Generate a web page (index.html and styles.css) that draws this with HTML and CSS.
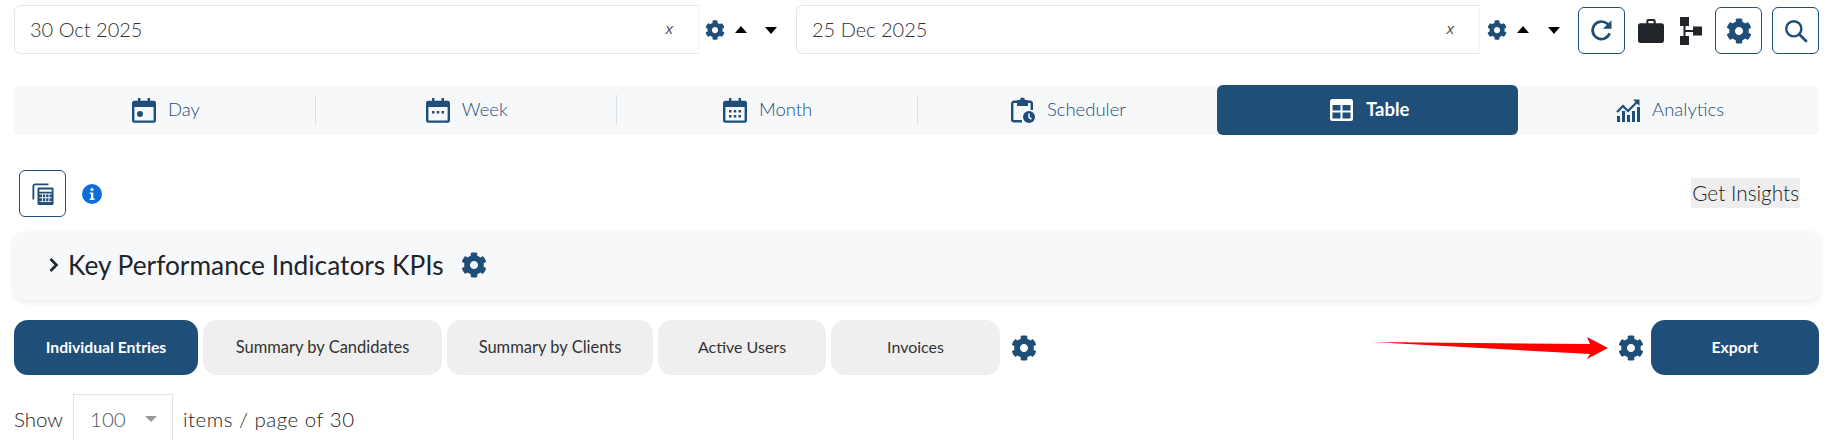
FILE: index.html
```html
<!DOCTYPE html>
<html lang="en">
<head>
<meta charset="utf-8">
<title>Table</title>
<link rel="stylesheet" href="styles.css">
</head>
<body>
<svg class="defs" width="0" height="0" aria-hidden="true">
  <symbol id="cog" viewBox="0 0 512 512"><path fill="currentColor" d="M487.4 315.7l-42.6-24.6c4.3-23.2 4.3-47 0-70.2l42.6-24.6c4.9-2.8 7.1-8.6 5.5-14-11.1-35.6-30-67.8-54.7-94.6-3.8-4.1-10-5.1-14.8-2.3L380.8 110c-17.9-15.4-38.5-27.3-60.8-35.1V25.8c0-5.6-3.9-10.5-9.4-11.7-36.7-8.2-74.3-7.8-109.2 0-5.5 1.2-9.4 6.1-9.4 11.7V75c-22.2 7.9-42.8 19.8-60.8 35.1L88.7 85.5c-4.9-2.8-11-1.9-14.8 2.3-24.7 26.7-43.6 58.9-54.7 94.6-1.7 5.4.6 11.2 5.5 14L67.3 221c-4.3 23.2-4.3 47 0 70.2l-42.6 24.6c-4.9 2.8-7.1 8.6-5.5 14 11.1 35.6 30 67.8 54.7 94.6 3.8 4.1 10 5.1 14.8 2.3l42.6-24.6c17.9 15.4 38.5 27.3 60.8 35.1v49.2c0 5.6 3.9 10.5 9.4 11.7 36.7 8.2 74.3 7.8 109.2 0 5.5-1.2 9.4-6.1 9.4-11.7v-49.2c22.2-7.9 42.8-19.8 60.8-35.1l42.6 24.6c4.9 2.8 11 1.9 14.8-2.3 24.7-26.7 43.6-58.9 54.7-94.6 1.5-5.5-.7-11.3-5.6-14.1zM256 336c-44.1 0-80-35.9-80-80s35.9-80 80-80 80 35.9 80 80-35.9 80-80 80z"/></symbol>
  <symbol id="cal" viewBox="0 0 24 26"><path fill="none" stroke="currentColor" stroke-width="2.4" d="M2.2 5h19.6a1 1 0 0 1 1 1v17.6a1 1 0 0 1-1 1H2.2a1 1 0 0 1-1-1V6a1 1 0 0 1 1-1z"/><path fill="currentColor" d="M1 5h22v5H1zM6 1h2.4v5H6zM15.6 1H18v5h-2.4z"/></symbol>
</svg>

<header class="date-bar">
  <div class="date-input date-input-first"><span>30 Oct 2025</span><i class="clear">x</i></div>
  <div class="date-tools">
    <svg class="cog-s"><use href="#cog"/></svg>
    <span class="tri tri-up"></span>
    <span class="tri tri-down"></span>
  </div>
  <div class="date-input date-input-second"><span>25 Dec 2025</span><i class="clear">x</i></div>
  <div class="date-tools">
    <svg class="cog-s"><use href="#cog"/></svg>
    <span class="tri tri-up"></span>
    <span class="tri tri-down"></span>
  </div>
  <div class="actions">
    <button class="icon-btn" type="button" aria-label="Refresh">
      <svg width="25" height="25" viewBox="0 0 24 24"><path fill="none" stroke="currentColor" stroke-width="2.6" d="M19.8 14.6A8.4 8.4 0 1 1 17.6 5.6l2.4 2.3"/><path fill="currentColor" d="M21.6 2.2v8.2h-8.2z"/></svg>
    </button>
    <svg class="case" width="26" height="24" viewBox="0 0 25 23"><path fill="#212529" d="M8 4V2a2 2 0 0 1 2-2h5a2 2 0 0 1 2 2v2h5.500a2.500 2.500 0 0 1 2.500 2.500V20.500a2.500 2.500 0 0 1-2.500 2.500h-20A2.500 2.500 0 0 1 0 20.500V6.500A2.500 2.500 0 0 1 2.500 4zM10 2v2h5V2z"/></svg>
    <svg class="tree" width="22" height="28" viewBox="0 0 22 28"><path fill="#212529" d="M0 0h9v9H0zM0 19h9v9H0zM13 9.500h9v9h-9zM3.500 9h2v10h-2zM5 13h8v2H5z"/></svg>
    <button class="icon-btn" type="button" aria-label="Settings"><svg class="cog-l"><use href="#cog"/></svg></button>
    <button class="icon-btn" type="button" aria-label="Search">
      <svg width="24" height="24" viewBox="0 0 24 24"><circle cx="9.800" cy="9.800" r="7.600" fill="none" stroke="currentColor" stroke-width="2.400"/><path stroke="currentColor" stroke-width="2.800" stroke-linecap="round" d="M15.500 15.500l6.500 6.500"/></svg>
    </button>
  </div>
</header>

<nav class="tabs">
  <a class="tab">
    <svg class="tab-icon"><use href="#cal"/><circle cx="8" cy="17" r="3" fill="currentColor"/></svg>
    <span>Day</span>
  </a>
  <a class="tab">
    <svg class="tab-icon"><use href="#cal"/><path fill="currentColor" d="M6 14h2.500v2.500H6zM10.750 14h2.500v2.500h-2.500zM15.500 14H18v2.500h-2.500z"/></svg>
    <span>Week</span>
  </a>
  <a class="tab">
    <svg class="tab-icon"><use href="#cal"/><path fill="currentColor" d="M6 13h2.500v2.500H6zM10.750 13h2.500v2.500h-2.500zM15.500 13H18v2.500h-2.500zM6 18h2.500v2.500H6zM10.750 18h2.500v2.500h-2.500zM15.500 18H18v2.500h-2.500z"/></svg>
    <span>Month</span>
  </a>
  <a class="tab tab-sched">
    <svg class="tab-icon" viewBox="0 0 24 26"><path fill="none" stroke="currentColor" stroke-width="2.400" d="M11 24.300H3a1.800 1.800 0 0 1-1.800-1.800V6.500A1.800 1.800 0 0 1 3 4.700h16a1.800 1.800 0 0 1 1.800 1.800V13"/><path fill="currentColor" d="M6 3h3a2.500 2.500 0 0 1 5 0h3v6H6z"/><circle cx="18" cy="20" r="6" fill="currentColor"/><path fill="none" stroke="#f6f8fa" stroke-width="1.500" d="M18 16.500V20.500l2.500 1.500"/></svg>
    <span>Scheduler</span>
  </a>
  <a class="tab tab-active">
    <svg class="tab-icon" viewBox="0 0 24 24"><path fill="currentColor" fill-rule="evenodd" d="M3 1h18a2.500 2.500 0 0 1 2.500 2.500v17A2.500 2.500 0 0 1 21 23H3a2.500 2.500 0 0 1-2.500-2.500v-17A2.500 2.500 0 0 1 3 1zM3 7v5.500h8V7zM13 7v5.500h8V7zM3 14.500V20.500h8v-6zM13 14.500V20.500h8v-6z"/></svg>
    <span>Table</span>
  </a>
  <a class="tab">
    <svg class="tab-icon" viewBox="0 0 24 24"><path fill="none" stroke="currentColor" stroke-width="2.200" d="M1 14l6-6 5 5 9-9"/><path fill="currentColor" d="M23.500 1.500v6.500l-6.500-6.500zM1 18h3v6H1zM6 13h3v11H6zM11 17h3v7h-3zM16 13h3v11h-3zM21 9h3v15h-3z"/></svg>
    <span>Analytics</span>
  </a>
</nav>

<section class="tools-row">
  <div class="tools-left">
    <button class="icon-btn" type="button" aria-label="Calculator">
      <svg width="22" height="22" viewBox="0 0 24 24"><path fill="none" stroke="currentColor" stroke-width="2" d="M18 1.500H3.500a2 2 0 0 0-2 2V18"/><path fill="currentColor" d="M7.500 5h14.500a1.500 1.500 0 0 1 1.500 1.500v16a1.500 1.500 0 0 1-1.500 1.500H7.500A1.500 1.500 0 0 1 6 22.500V6.500A1.500 1.500 0 0 1 7.500 5z"/><path fill="#fff" d="M8 7h13.500v2.500H8zM8 11.500h13.500v1H8zM8 15.500h13.500v1H8zM8 19.500h13.500v1H8zM11 11.500h1v9.500h-1zM14.500 11.500h1v9.500h-1zM18 11.500h1v9.500h-1z"/></svg>
    </button>
    <svg class="info" width="20" height="20" viewBox="0 0 20 20"><circle cx="10" cy="10" r="10" fill="#0d6edb"/><circle cx="10" cy="5.500" r="1.600" fill="#fff"/><path fill="#fff" d="M7.800 8.500h3.500v6h1.200v1.500H7.800v-1.500H9v-4.500H7.800z"/></svg>
  </div>
  <span class="insights">Get Insights</span>
</section>

<section class="kpi">
  <svg class="chev" width="10" height="16" viewBox="0 0 10 16"><path fill="none" stroke="#212529" stroke-width="2.600" d="M1.500 2l6 6-6 6"/></svg>
  <h2 class="kpi-title">Key Performance Indicators KPIs</h2>
  <svg class="cog-m"><use href="#cog"/></svg>
</section>

<section class="report-bar">
  <button class="pill pill-active pill-a" type="button">Individual Entries</button>
  <button class="pill pill-b" type="button">Summary by Candidates</button>
  <button class="pill pill-c" type="button">Summary by Clients</button>
  <button class="pill pill-d" type="button">Active Users</button>
  <button class="pill pill-e" type="button">Invoices</button>
  <svg class="cog-m cog-gap"><use href="#cog"/></svg>
  <div class="report-end">
    <svg class="arrow" width="238" height="22" viewBox="0 0 238 22">
      <defs><linearGradient id="fade" x1="0" x2="1" y1="0" y2="0"><stop offset="0" stop-color="#ff0000" stop-opacity=".4"/><stop offset=".1" stop-color="#ff0000"/></linearGradient></defs>
      <path fill="url(#fade)" d="M0 5 L219 7 L216 0 L237 11 L216 22 L219 17z"/>
    </svg>
    <svg class="cog-m"><use href="#cog"/></svg>
    <button class="pill pill-active pill-export" type="button">Export</button>
  </div>
</section>

<section class="pager">
  <span class="pager-show">Show</span>
  <div class="page-select"><span>100</span><i class="caret"></i></div>
  <span class="pager-items">items / page of 30</span>
</section>
</body>
</html>
```

FILE: styles.css
```css
* { box-sizing: border-box; }
html, body { margin: 0; height: 440px; overflow: hidden; background: #fff; }
body {
  padding: 5px 24px 0 14px;
  font-family: "Lato", "Noto Sans", sans-serif;
  color: #212529;
}
.defs { position: absolute; }
button { font-family: inherit; cursor: pointer; }

.date-bar { display: flex; align-items: flex-start; height: 49px; }
.date-input {
  flex: none;
  display: flex;
  align-items: center;
  justify-content: space-between;
  height: 49px;
  padding: 0 25px 2px 15px;
  border: 1px solid #e8e8e8;
  border-right-color: #f3f3f3;
  border-radius: 6px 0 0 6px;
  font-size: 20px;
  font-weight: 300;
  color: #333;
  background: #fff;
}
.date-input-first { width: 685px; }
.date-input-second { width: 684px; }
.clear { font-size: 15px; font-family: "Liberation Sans", sans-serif; color: #555; }
.date-tools { flex: none; width: 97px; display: flex; align-items: center; height: 49px; padding: 0 0 0 6px; }
.date-input-second + .date-tools { width: 98px; padding-left: 7px; }
.cog-s { width: 20px; height: 20px; color: #1f4e79; margin-top: 1px; }
.tri { width: 0; height: 0; border-left: 6px solid transparent; border-right: 6px solid transparent; }
.tri-up { border-bottom: 7px solid #000; margin-left: 10px; margin-top: -1px; }
.tri-down { border-top: 7px solid #000; margin-left: 18px; margin-top: 1px; }
.date-input-second + .date-tools .tri-down { margin-left: 19px; }

.actions { flex: none; display: flex; align-items: center; height: 49px; padding-top: 2px; }
.icon-btn {
  flex: none;
  width: 47px;
  height: 47px;
  display: inline-flex;
  align-items: center;
  justify-content: center;
  padding: 0;
  border: 1px solid #1f4e79;
  border-radius: 6px;
  background: #fff;
  color: #1f4e79;
}
.case { margin-left: 13px; }
.tree { margin-left: 16px; }
.actions .tree + .icon-btn { margin-left: 13px; }
.actions .icon-btn:last-child { margin-left: 10px; }
.cog-l { width: 26px; height: 26px; color: #1f4e79; }

.tabs {
  display: grid;
  grid-template-columns: repeat(6, 1fr);
  width: 1805px;
  height: 50px;
  margin-top: 31px;
  background: #f6f8fa;
  border-radius: 6px;
}
.tab {
  position: relative;
  display: flex;
  align-items: center;
  justify-content: center;
  gap: 12px;
  padding-left: 3px;
  font-size: 18.500px;
  font-weight: 300;
  color: #1f4e79;
}
.tab span { padding-bottom: 2px; }
.tab + .tab::before {
  content: "";
  position: absolute;
  left: 0;
  top: 10px;
  bottom: 10px;
  width: 1px;
  background: #dcdfe2;
}
.tab-active + .tab::before, .tab-active::before { display: none; }
.tab-active { background: #1f4e79; color: #fff; border-radius: 6px; font-weight: 700; }
.tab-icon { width: 24px; height: 26px; color: #1f4e79; flex: none; }
.tab svg[viewBox="0 0 24 24"] { height: 24px; }
.tab-active .tab-icon { color: #fff; width: 25px; height: 25px; }

.tools-row {
  display: flex;
  align-items: center;
  justify-content: space-between;
  width: 1781px;
  height: 47px;
  margin: 35px 0 0 5px;
}
.tools-left { display: flex; align-items: center; gap: 16px; }
.insights {
  background: #eee;
  font-size: 20.800px;
  font-weight: 300;
  height: 30px;
  line-height: 30px;
  color: #222;
  padding: 0 1px;
  margin-top: -2px;
}

.kpi {
  display: flex;
  align-items: center;
  width: 1806px;
  height: 68px;
  margin-top: 15px;
  padding: 0 0 2px 35px;
  background: #f7f8fa;
  border-radius: 10px;
  box-shadow: 0 2px 6px rgba(0, 0, 0, .09);
}
.chev { flex: none; }
.kpi-title { margin: 0 17px 0 9px; font-size: 26.300px; font-weight: 400; color: #212529; }
.cog-m { width: 26px; height: 26px; color: #1f4e79; flex: none; }

.report-bar { display: flex; align-items: center; gap: 5px; width: 1805px; height: 55px; margin-top: 20px; }
.pill {
  flex: none;
  height: 55px;
  border: 0;
  border-radius: 14px;
  background: #efefef;
  color: #333;
  font-size: 16.500px;
  font-weight: 400;
  padding: 0 0 2px;
}
.pill-active { background: #1f4e79; color: #fff; font-weight: 700; font-size: 15.700px; }
.pill-a { width: 184px; }
.pill-b { width: 239px; }
.pill-c { width: 206px; }
.pill-d { width: 168px; font-size: 16px; }
.pill-e { width: 169px; font-size: 16px; }
.cog-gap { margin-left: 6px; }
.report-end { margin-left: auto; position: relative; display: flex; align-items: center; gap: 7px; }
.pill-export { width: 168px; }
.arrow { position: absolute; right: 210px; top: 17px; }

.pager { display: flex; align-items: center; gap: 10px; margin-top: 20px; height: 50px; font-size: 20.500px; font-weight: 300; color: #222; padding-bottom: 2px; }
.pager-items { letter-spacing: .5px; }
.page-select {
  display: flex;
  align-items: center;
  gap: 19px;
  width: 100px;
  height: 50px;
  padding-left: 16px;
  border: 1px solid #e3e3e3;
  color: #4c5b6a;
}
.caret { border-left: 6px solid transparent; border-right: 6px solid transparent; border-top: 6px solid #999; }
```
